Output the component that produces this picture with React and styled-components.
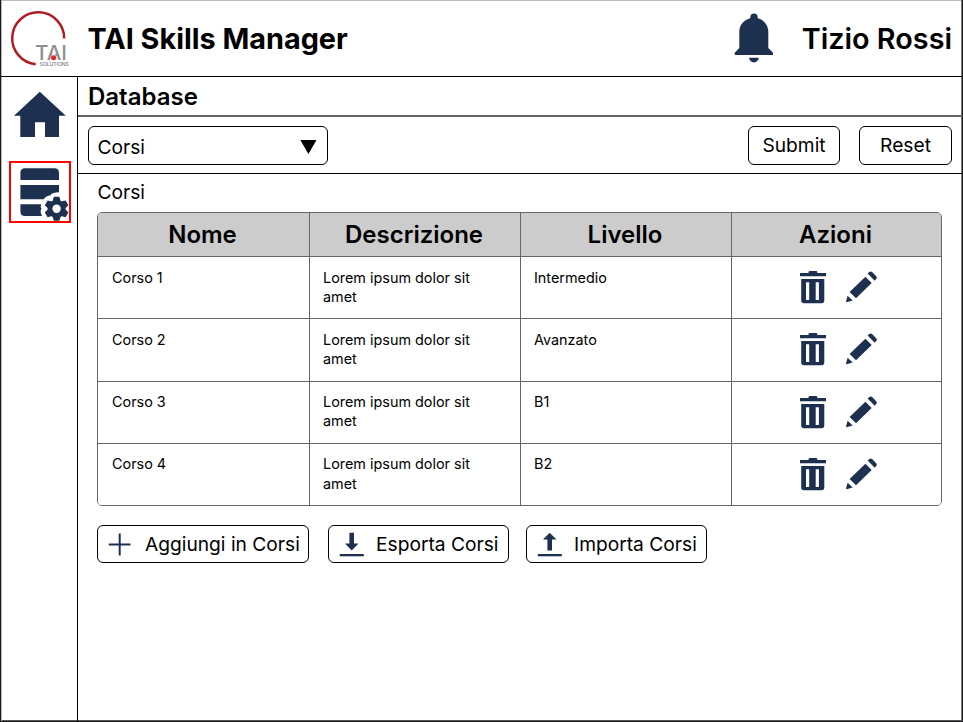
import React from "react";
import styled, { createGlobalStyle } from "styled-components";

const NAVY = "#1e3050";

const Global = createGlobalStyle`
  * { box-sizing: border-box; }
  body { margin: 0; background: #fff; }
`;

const Frame = styled.div`
  width: 963px;
  height: 722px;
  display: flex;
  flex-direction: column;
  overflow: hidden;
  background: #fff;
  color: #000;
  font-family: Inter, sans-serif;
  border: solid #1c1c1e;
  border-width: 0 1px 1px;
  box-shadow: inset 1px 0 #b4b4b4, inset -1px 0 #777, inset 0 -1px #555, inset 0 1px #bcbcbc;
`;

const Header = styled.header`
  height: 77px;
  flex: none;
  display: flex;
  align-items: center;
  padding: 0 10px 0 9px;
  border-bottom: 1px solid #000;
`;

const Title = styled.h1`
  margin: 2px auto 0 17.5px;
  font-size: 28.8px;
  line-height: 36px;
  font-weight: 650;
  white-space: nowrap;
`;

const User = styled.div`
  margin: 2px 0 0 28px;
  font-size: 28.8px;
  line-height: 36px;
  font-weight: 560;
  white-space: nowrap;
`;

const Body = styled.div`
  flex: 1;
  display: flex;
  min-height: 0;
`;

const Sidebar = styled.nav`
  width: 77px;
  flex: none;
  display: flex;
  flex-direction: column;
  align-items: flex-start;
  padding: 14px 0 0 8px;
  gap: 22px;
  border-right: 1px solid #000;
`;

const NavItem = styled.a`
  display: block;
  width: 62px;
  height: ${(p) => (p.$active ? 62 : 48)}px;
  outline: ${(p) => (p.$active ? "2px solid #ff0000" : "none")};
  outline-offset: -2px;
  svg { display: block; }
`;

const Main = styled.main`
  flex: 1;
  min-width: 0;
  display: flex;
  flex-direction: column;
`;

const PageTitle = styled.h2`
  margin: 0 1px 0 0;
  height: 40px;
  flex: none;
  padding-left: 10px;
  font-size: 24px;
  line-height: 39px;
  font-weight: 580;
  border-bottom: 2px solid #666;
`;

const Toolbar = styled.div`
  height: 57px;
  flex: none;
  display: flex;
  align-items: flex-start;
  padding: 9px 10px 0;
  gap: 19px;
  border-bottom: 1px solid #000;
`;

const Select = styled.button`
  width: 240px;
  height: 39px;
  margin-right: auto;
  padding: 3px 10px 0 8.5px;
  display: flex;
  align-items: center;
  justify-content: space-between;
  border: 1px solid #000;
  border-radius: 6px;
  background: #fff;
  color: #000;
  font: 400 19.2px/24px Inter, sans-serif;
`;

const Button = styled.button`
  width: ${(p) => p.$width}px;
  height: ${(p) => (p.$inset ? 38 : 39)}px;
  padding: 0 0 1px ${(p) => p.$inset || 0}px;
  display: flex;
  align-items: center;
  justify-content: ${(p) => (p.$inset ? "flex-start" : "center")};
  gap: ${(p) => p.$gap || 12}px;
  flex: none;
  border: 1px solid #000;
  border-radius: 6px;
  background: #fff;
  color: #000;
  font: 400 19.2px/24px Inter, sans-serif;
  white-space: nowrap;
`;

const Section = styled.section`
  padding: 6px 20px 0 19px;
`;

const Caption = styled.h3`
  margin: 0 0 7px;
  padding-left: 0.5px;
  font-size: 19.2px;
  line-height: 25px;
  font-weight: 400;
`;

const Table = styled.div`
  width: 845px;
  border: 1px solid #666;
  border-radius: 5px;
  overflow: hidden;
`;

const Row = styled.div`
  display: grid;
  grid-template-columns: 211px 211px 211px 1fr;
  height: ${(p) => (p.$head ? 43 : 62.3)}px;
  background: ${(p) => (p.$head ? "#ccc" : "#fff")};
  & + & { border-top: 1px solid #666; }
`;

const HeadCell = styled.div`
  font-size: 24px;
  line-height: 43px;
  font-weight: 580;
  text-align: center;
  padding-right: 2px;
  & + & { border-left: 1px solid #666; }
`;

const Cell = styled.div`
  padding: 10.6px 13px 0;
  font-size: 14.4px;
  line-height: 19.2px;
  & + & { border-left: 1px solid #666; }
  &:first-child { padding-left: 14px; }
`;

const Actions = styled(Cell)`
  display: flex;
  align-items: flex-start;
  padding: 14px 0 0 68px;
  gap: 20px;
`;

const Footer = styled.div`
  display: flex;
  padding-top: 19px;
`;

const Gap = styled.span`
  width: ${(p) => p.$w}px;
`;

const LogoText = styled.text`
  font-family: Inter, sans-serif;
`;

const Logo = () => (
  <svg width="60" height="60" viewBox="10 8 60 60">
    <path d="M64.2 38.5A26 26 0 1 0 35.7 64.2" fill="none" stroke="#b01c22" strokeWidth="2.5" />
    <LogoText x="35" y="60" fontSize="20" fontWeight="500" fill="#8f8f8f" textLength="32" lengthAdjust="spacingAndGlyphs">TAI</LogoText>
    <path d="M50.6 58.5L53.5 51L56.6 58.5Z" fill="#fff" />
    <circle cx="53.6" cy="57.7" r="2.5" fill="#e8202c" />
    <LogoText x="39.8" y="65.6" fontSize="5" fontWeight="500" fill="#777" textLength="29" lengthAdjust="spacingAndGlyphs">SOLUTIONS</LogoText>
  </svg>
);

const Bell = () => (
  <svg width="40" height="50" viewBox="0 0 40 50" fill={NAVY}>
    <path d="M16.3 5.3V4.2a3.7 3.7 0 0 1 7.4 0v1.1C30.3 7.1 34.3 12.2 34.3 19V35L39 39.8V42H.7V39.8L5.3 35V19C5.3 12.2 9.7 7.1 16.3 5.3Z" />
    <path d="M15.1 44.7h9.6a4.8 4.8 0 0 1-9.6 0Z" />
  </svg>
);

const Home = () => (
  <svg width="62" height="48" viewBox="9 91 62 48" fill={NAVY}>
    <path d="M39.8 91.8L65.8 115.8H59V137H45V122.3H35V137H20.3V115.8H14Z" />
  </svg>
);

const gearTeeth = [0, 60, 120, 180, 240, 300];

const DatabaseGear = () => (
  <svg width="62" height="62" viewBox="9 161 62 62" fill={NAVY}>
    <path d="M20.4 180V172.7Q20.4 168.2 25 168.2H54.5Q59 168.2 59 172.7V180Z" />
    <path d="M20.4 185H59V192.3C54.5 192.3 52 193 50.2 195.4C47 195.6 45 197 43.8 199.2H20.4Z" />
    <path d="M20.4 204.3H41.2L40.6 207L41.5 208.5L40.7 210.7V212.7L42 216H25Q20.4 216 20.4 211.5Z" />
    <g transform="translate(56.6 208.8)">
      {gearTeeth.map((angle) => (
        <path key={angle} transform={`rotate(${angle})`} d="M-4-7.5L-2.8-12H2.8L4-7.5Z" />
      ))}
      <circle r="9" />
      <circle r="4.2" fill="#fff" />
    </g>
  </svg>
);

const Trash = () => (
  <svg width="26" height="33" viewBox="0 0 26 33" fill={NAVY}>
    <path d="M0 2H8.5V1.2Q8.5 0 10 0H16Q17.3 0 17.3 1.2V2H26V5.2H0Z" />
    <path fillRule="evenodd" d="M1.2 8H24.3V29.5Q24.3 32.3 21.5 32.3H4Q1.2 32.3 1.2 29.5ZM6 11.2V29H9.2V11.2ZM15.7 11.2V29H18.9V11.2Z" />
  </svg>
);

const Pencil = () => (
  <svg width="32" height="33" viewBox="0 0 32 33" fill={NAVY}>
    <path d="M23.3 1.1Q24.7-.3 26.1 1.1L30.2 5.2Q31.5 6.6 30.2 8L28.7 9.7L21.6 2.6Z" />
    <path d="M19.4 5.8L25.7 12.1L10 27.3L3.6 20.9Z" />
    <path d="M1.6 24.8L6.7 29.6L.5 31.2Q0 31 0 30.6Z" />
  </svg>
);

const Plus = () => (
  <svg width="26" height="28" viewBox="0 0 26 28" stroke={NAVY} strokeWidth="2">
    <path d="M1.8 14.5H23.5M12.7 3.5V25.5" />
  </svg>
);

const TransferArrow = ({ up }) => (
  <svg width="26" height="28" viewBox="0 0 26 28" fill={NAVY}>
    {up ? (
      <path d="M12.7 2.7L19.5 9.5H15V20.5H10.4V9.5H6Z" />
    ) : (
      <path d="M10.4 2.7H15V13.5H19.5L12.7 20.5L6 13.5H10.4Z" />
    )}
    <path d="M.8 24H24.8v2.3H.8z" />
  </svg>
);

const Caret = () => (
  <svg width="17" height="14" viewBox="0 0 17 14">
    <path d="M.3 0H16.5L8.4 14Z" />
  </svg>
);

const courses = [
  ["Corso 1", "Intermedio"],
  ["Corso 2", "Avanzato"],
  ["Corso 3", "B1"],
  ["Corso 4", "B2"],
];

export default function App() {
  return (
    <>
      <Global />
      <Frame>
        <Header>
          <Logo />
          <Title>TAI Skills Manager</Title>
          <Bell />
          <User>Tizio Rossi</User>
        </Header>
        <Body>
          <Sidebar>
            <NavItem aria-label="Home"><Home /></NavItem>
            <NavItem $active aria-label="Database"><DatabaseGear /></NavItem>
          </Sidebar>
          <Main>
            <PageTitle>Database</PageTitle>
            <Toolbar>
              <Select>Corsi<Caret /></Select>
              <Button $width={92}>Submit</Button>
              <Button $width={93}>Reset</Button>
            </Toolbar>
            <Section>
              <Caption>Corsi</Caption>
              <Table>
                <Row $head>
                  {["Nome", "Descrizione", "Livello", "Azioni"].map((name) => (
                    <HeadCell key={name}>{name}</HeadCell>
                  ))}
                </Row>
                {courses.map(([name, level]) => (
                  <Row key={name}>
                    <Cell>{name}</Cell>
                    <Cell>Lorem ipsum dolor sit amet</Cell>
                    <Cell>{level}</Cell>
                    <Actions><Trash /><Pencil /></Actions>
                  </Row>
                ))}
              </Table>
              <Footer>
                <Button $width={212} $inset={9}><Plus />Aggiungi in Corsi</Button>
                <Gap $w={19} />
                <Button $width={181} $inset={10} $gap={11}><TransferArrow />Esporta Corsi</Button>
                <Gap $w={17} />
                <Button $width={181} $inset={10} $gap={11}><TransferArrow up />Importa Corsi</Button>
              </Footer>
            </Section>
          </Main>
        </Body>
      </Frame>
    </>
  );
}
